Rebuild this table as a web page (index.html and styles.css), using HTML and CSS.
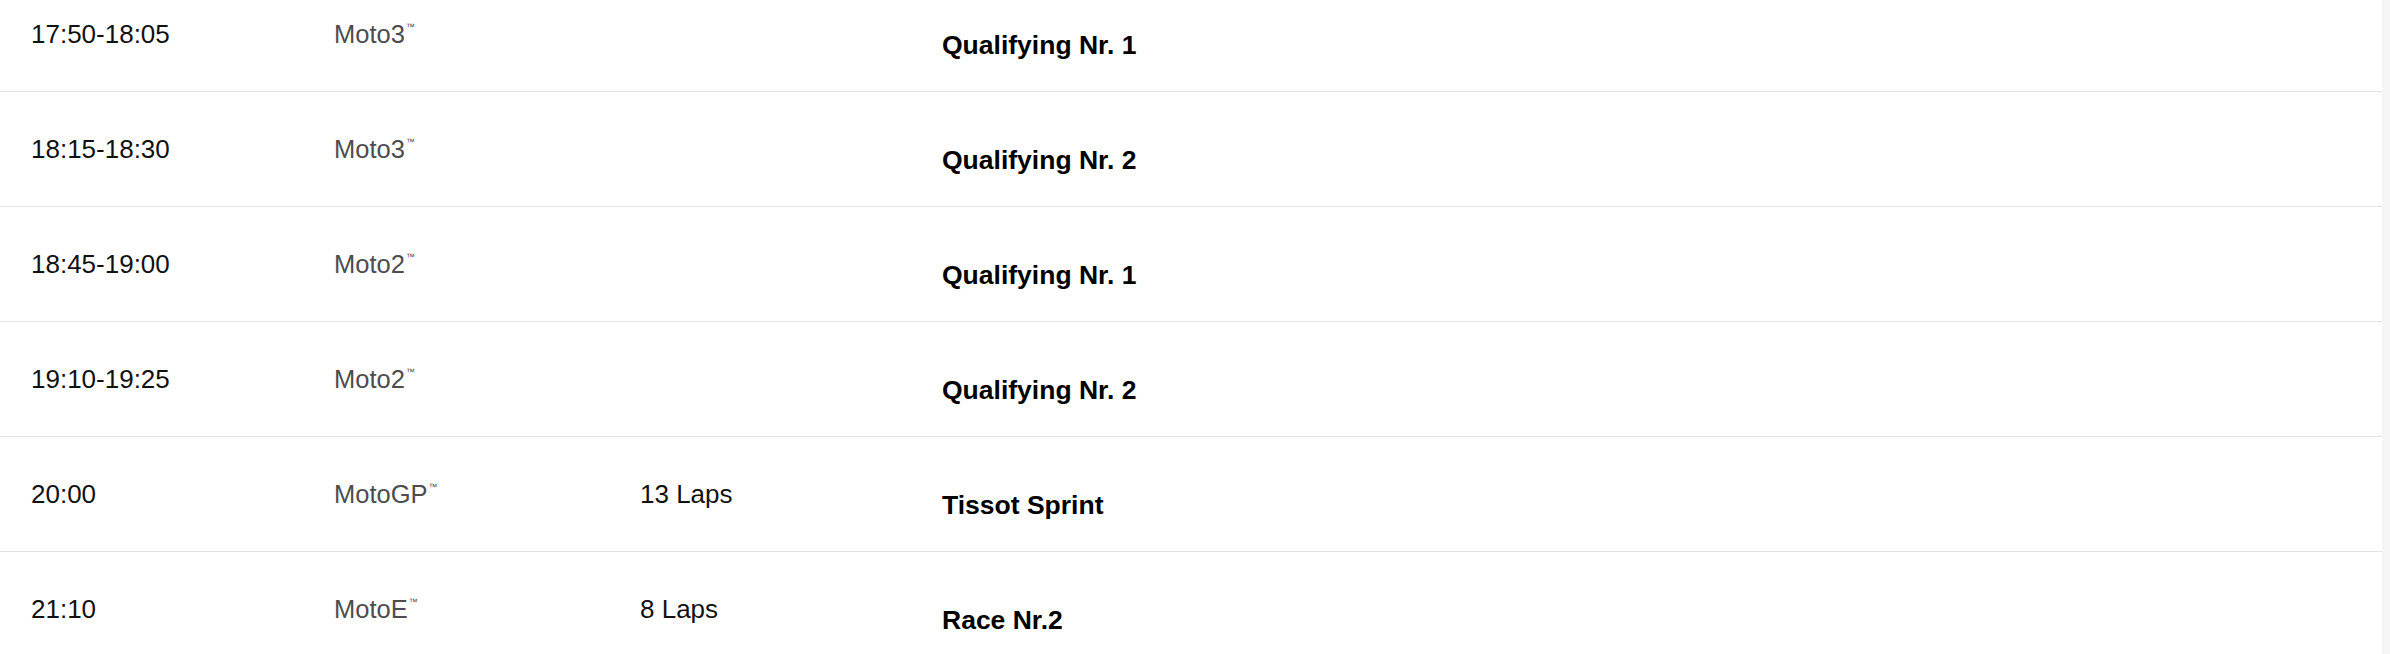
FILE: index.html
```html
<!DOCTYPE html>
<html lang="en">
<head>
<meta charset="utf-8">
<title>Schedule</title>
<link rel="stylesheet" href="styles.css">
</head>
<body>
<main class="page">
  <div class="schedule">
    <div class="row">
      <div class="time">17:50-18:05</div>
      <div class="cat">Moto3<sup class="tm">™</sup></div>
      <div class="laps"></div>
      <div class="session">Qualifying Nr. 1</div>
    </div>
    <div class="row">
      <div class="time">18:15-18:30</div>
      <div class="cat">Moto3<sup class="tm">™</sup></div>
      <div class="laps"></div>
      <div class="session">Qualifying Nr. 2</div>
    </div>
    <div class="row">
      <div class="time">18:45-19:00</div>
      <div class="cat">Moto2<sup class="tm">™</sup></div>
      <div class="laps"></div>
      <div class="session">Qualifying Nr. 1</div>
    </div>
    <div class="row">
      <div class="time">19:10-19:25</div>
      <div class="cat">Moto2<sup class="tm">™</sup></div>
      <div class="laps"></div>
      <div class="session">Qualifying Nr. 2</div>
    </div>
    <div class="row">
      <div class="time">20:00</div>
      <div class="cat">MotoGP<sup class="tm">™</sup></div>
      <div class="laps">13 Laps</div>
      <div class="session">Tissot Sprint</div>
    </div>
    <div class="row">
      <div class="time">21:10</div>
      <div class="cat">MotoE<sup class="tm">™</sup></div>
      <div class="laps">8 Laps</div>
      <div class="session">Race Nr.2</div>
    </div>
  </div>
  <div class="scrollbar"></div>
</main>
</body>
</html>
```
FILE: styles.css
```css
html, body {
  margin: 0;
  padding: 0;
  height: 100%;
  overflow: hidden;
}
body {
  background: #ffffff;
  font-family: "Liberation Sans", Arial, sans-serif;
  color: #000;
}
.page {
  display: flex;
  height: 100%;
}
.schedule {
  flex: 1;
  margin-top: -23px;
  background: #fff;
}
.scrollbar {
  width: 8px;
  background: #f5f5f5;
  flex: none;
}
.row {
  display: grid;
  grid-template-columns: 303px 306px 302px 1fr;
  align-items: center;
  height: 114px;
  padding-left: 31px;
  border-bottom: 1px solid #e4e4e4;
}
.time {
  font-size: 26px;
  color: #111;
}
.cat {
  font-size: 25.5px;
  color: #4d4d4d;
}
.tm {
  font-size: 9px;
  vertical-align: top;
  position: relative;
  top: 2px;
  margin-left: 1px;
}
.laps {
  font-size: 26px;
  color: #111;
}
.session {
  font-size: 26.5px;
  font-weight: 700;
  color: #000;
  padding-top: 22px;
}
```
